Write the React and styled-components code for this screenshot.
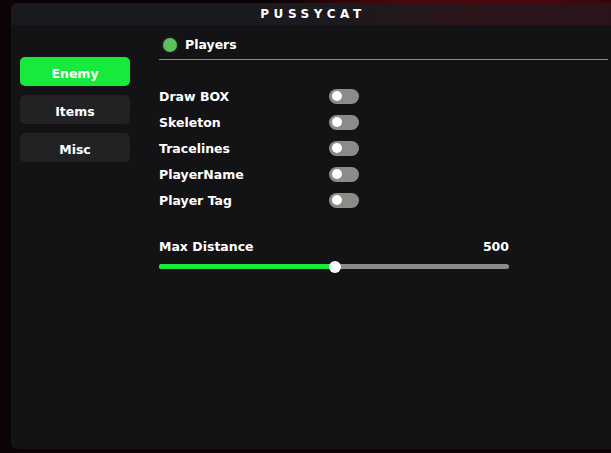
import React, { useState } from 'react';
import styled, { createGlobalStyle } from 'styled-components';

const GlobalStyle = createGlobalStyle`
  html, body {
    margin: 0;
    padding: 0;
    width: 611px;
    height: 453px;
    overflow: hidden;
    background:
      radial-gradient(ellipse 220px 30px at 520px 6px, rgba(120, 10, 20, 0.7), transparent),
      radial-gradient(ellipse 120px 20px at 390px 4px, rgba(90, 8, 14, 0.6), transparent),
      #0b0305;
    font-family: "DejaVu Sans", Verdana, sans-serif;
  }
`;

const Window = styled.div`
  margin: 3px 0 0 11px;
  width: 600px;
  height: 446px;
  background: #131316;
  border-radius: 6px 0 0 6px;
  display: flex;
  flex-direction: column;
  overflow: hidden;
`;

const TitleBar = styled.div`
  height: 22px;
  display: flex;
  align-items: center;
  justify-content: center;
  padding-left: 4px;
  background: linear-gradient(90deg, #19191e 0%, #1b1a1f 55%, #2a1519 75%, #2b1419 100%);
  color: #ffffff;
  font-weight: bold;
  font-size: 12px;
  letter-spacing: 4.6px;
`;

const Body = styled.div`
  flex: 1;
  display: flex;
`;

const Sidebar = styled.nav`
  width: 110px;
  padding: 32px 0 0 9px;
  display: flex;
  flex-direction: column;
  gap: 9px;
`;

const TabButton = styled.button`
  height: 29px;
  padding: 3px 0 0;
  border: none;
  border-radius: 5px;
  background: ${p => (p.$active ? '#16ea3d' : '#222225')};
  color: #ffffff;
  font-family: inherit;
  font-weight: bold;
  font-size: 12.5px;
  cursor: pointer;
`;

const Content = styled.section`
  margin-left: 29px;
  width: 449px;
  padding-top: 12px;
`;

const Header = styled.div`
  display: flex;
  align-items: center;
  gap: 8px;
  padding: 0 0 7px 4px;
  border-bottom: 1px solid #3ac24f;
  color: #ffffff;
  font-weight: bold;
  font-size: 12.5px;
`;

const Dot = styled.span`
  width: 14px;
  height: 14px;
  border-radius: 50%;
  background: #5cc15d;
  box-shadow: 0 0 0 2px #1d1d20;
`;

const Options = styled.div`
  margin-top: 28px;
  display: flex;
  flex-direction: column;
  gap: 10px;
`;

const Row = styled.label`
  display: flex;
  align-items: center;
  height: 16px;
  color: #ffffff;
  font-weight: bold;
  font-size: 12.5px;
`;

const Label = styled.span`
  width: 170px;
`;

const Toggle = styled.span`
  width: 30px;
  height: 15px;
  border-radius: 8px;
  background: ${p => (p.$on ? '#16ea3d' : '#8b8b87')};
  display: flex;
  align-items: center;
  justify-content: ${p => (p.$on ? 'flex-end' : 'flex-start')};
  padding: 0 3px;
  box-sizing: border-box;
  cursor: pointer;
  &::after {
    content: '';
    width: 10px;
    height: 10px;
    border-radius: 50%;
    background: #ffffff;
  }
`;

const SliderBlock = styled.div`
  margin-top: 31px;
  width: 350px;
`;

const SliderHead = styled.div`
  display: flex;
  justify-content: space-between;
  color: #ffffff;
  font-weight: bold;
  font-size: 12.5px;
`;

const Track = styled.div`
  position: relative;
  margin-top: 10px;
  height: 5px;
  border-radius: 3px;
  background: #8b8b87;
`;

const Fill = styled.div`
  height: 100%;
  border-radius: 3px;
  background: #16ea3d;
`;

const Thumb = styled.div`
  position: absolute;
  top: 50%;
  width: 12px;
  height: 12px;
  margin: -6px 0 0 -5px;
  border-radius: 50%;
  background: #ffffff;
`;

const options = ['Draw BOX', 'Skeleton', 'Tracelines', 'PlayerName', 'Player Tag'];

export default function App() {
  const [tab, setTab] = useState('Enemy');
  const [on, setOn] = useState({});
  const distance = 500;
  const pct = (distance / 1000) * 100;

  return (
    <>
      <GlobalStyle />
      <Window>
        <TitleBar>PUSSYCAT</TitleBar>
        <Body>
          <Sidebar>
            {['Enemy', 'Items', 'Misc'].map(t => (
              <TabButton key={t} $active={tab === t} onClick={() => setTab(t)}>
                {t}
              </TabButton>
            ))}
          </Sidebar>
          <Content>
            <Header>
              <Dot />
              Players
            </Header>
            <Options>
              {options.map(o => (
                <Row key={o}>
                  <Label>{o}</Label>
                  <Toggle $on={!!on[o]} onClick={() => setOn({ ...on, [o]: !on[o] })} />
                </Row>
              ))}
            </Options>
            <SliderBlock>
              <SliderHead>
                <span>Max Distance</span>
                <span>{distance}</span>
              </SliderHead>
              <Track>
                <Fill style={{ width: `${pct}%` }} />
                <Thumb style={{ left: `${pct}%` }} />
              </Track>
            </SliderBlock>
          </Content>
        </Body>
      </Window>
    </>
  );
}
